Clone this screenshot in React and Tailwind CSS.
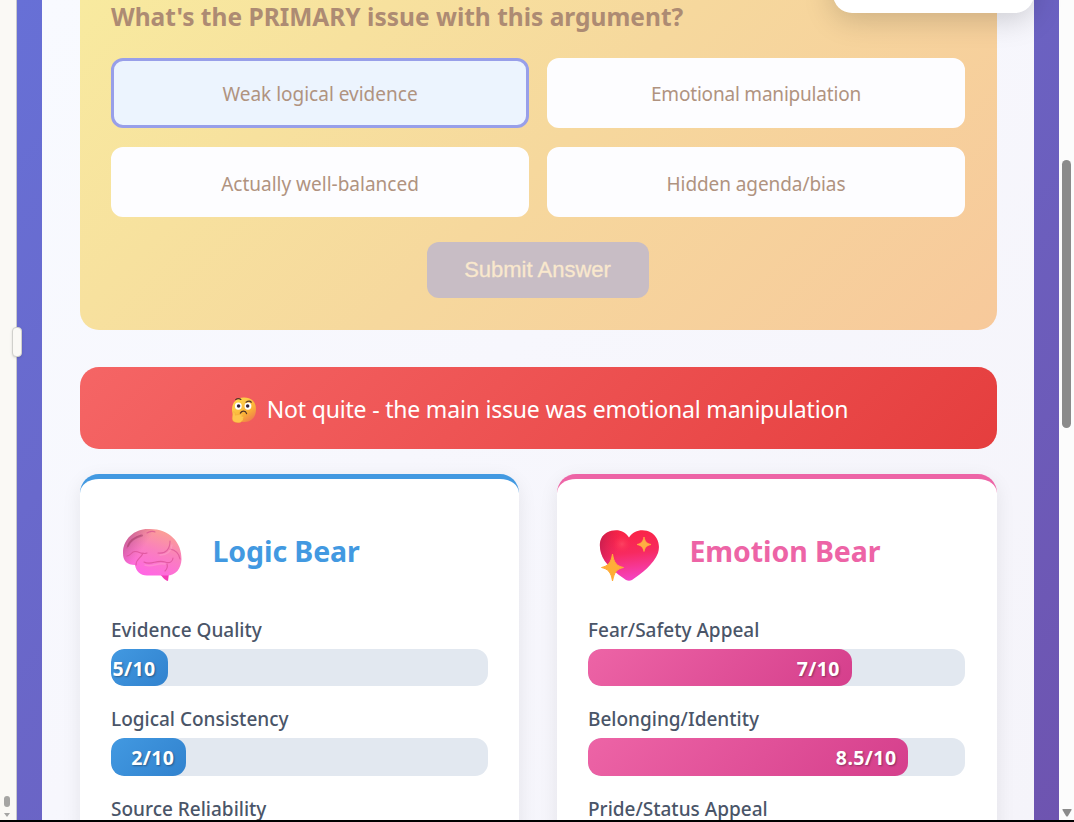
const options = [
  { label: "Weak logical evidence", style: "pt-0.5 tracking-normal", selected: true },
  { label: "Emotional manipulation", style: "pt-0.5 tracking-[-0.2px]" },
  { label: "Actually well-balanced", style: "pt-1 tracking-normal" },
  { label: "Hidden agenda/bias", style: "pt-1 tracking-[-0.08px]" },
];

const logicMetrics = [
  { label: "Evidence Quality", score: "5/10", percent: 15 },
  { label: "Logical Consistency", score: "2/10", percent: 20 },
  { label: "Source Reliability" },
];

const emotionMetrics = [
  { label: "Fear/Safety Appeal", score: "7/10", percent: 70 },
  { label: "Belonging/Identity", score: "8.5/10", percent: 85 },
  { label: "Pride/Status Appeal" },
];

function BrainIcon() {
  return (
    <svg viewBox="0 0 60 54" className="h-[54px] w-[60px]" fill="none">
      <defs>
        <linearGradient id="brain" x1="42" y1="2" x2="26" y2="48" gradientUnits="userSpaceOnUse">
          <stop stopColor="#fba093" />
          <stop offset="0.45" stopColor="#fa80bd" />
          <stop offset="1" stopColor="#ff66e4" />
        </linearGradient>
        <linearGradient id="brainShade" x1="2" y1="10" x2="20" y2="22" gradientUnits="userSpaceOnUse">
          <stop stopColor="#a8487c" stopOpacity="0.65" />
          <stop offset="1" stopColor="#c05090" stopOpacity="0" />
        </linearGradient>
      </defs>
      <path d="M37 45h10l-1 8c-2 0-5-3-9-8z" fill="#f53bb5" />
      <path d="M28 1C14 0 1 10 1 25c0 8 4 12 12 12 1 6 5 10.500 12 10.500h20c9 0 14-7 14.500-16C60 14 47 1 28 1z" fill="url(#brain)" />
      <path d="M28 1C14 0 1 10 1 25c0 8 4 12 12 12 1 6 5 10.500 12 10.500h20c9 0 14-7 14.500-16C60 14 47 1 28 1z" fill="url(#brainShade)" />
      <g stroke="#d54a8f" strokeWidth="1.1" strokeLinecap="round" opacity="0.65">
        <path d="M5 20C7 13 12 10 19 7M25 5c3-2 7-2 8-1" />
        <path d="M5 28c4 0 4-4.500 8-4.500 5 0 7 3.500 12 1.500" />
        <path d="M14 37c0-7 5-6 7-12" />
        <path d="M22 34c7 4 13-3 21 0 5 2 8-1 8-4M45 36c1 3 0 5-2 7" />
        <path d="M36 25c8 1 12-4 12-12M48 21c5 1 9 4 10 10" />
      </g>
      <path d="M6 18c2-6 8-9 14-10.500" stroke="#9d4468" strokeWidth="2" strokeLinecap="round" opacity="0.5" />
      <path d="M38 27c7 0 11-3 12-10M23 37c7 3 13-3 20-1" stroke="#ffa9cf" strokeWidth="1.5" strokeLinecap="round" opacity="0.4" />
    </svg>
  );
}

function HeartIcon() {
  return (
    <svg viewBox="0 0 60 54" className="h-[54px] w-[60px]" fill="none">
      <defs>
        <linearGradient id="heart" x1="32" y1="2" x2="38" y2="52" gradientUnits="userSpaceOnUse">
          <stop stopColor="#fa2445" />
          <stop offset="0.45" stopColor="#f72a60" />
          <stop offset="1" stopColor="#f544c6" />
        </linearGradient>
        <radialGradient id="glow" cx="0" cy="0" r="1" gradientTransform="translate(23 16) scale(9)" gradientUnits="userSpaceOnUse">
          <stop stopColor="#ff5068" stopOpacity="0.65" />
          <stop offset="1" stopColor="#ff3050" stopOpacity="0" />
        </radialGradient>
        <linearGradient id="heartShade" x1="0" y1="14" x2="20" y2="18" gradientUnits="userSpaceOnUse">
          <stop stopColor="#a01850" stopOpacity="0.55" />
          <stop offset="1" stopColor="#d01850" stopOpacity="0" />
        </linearGradient>
        <linearGradient id="star" x1="0" y1="10" x2="0" y2="54" gradientUnits="userSpaceOnUse">
          <stop stopColor="#ffad45" />
          <stop offset="1" stopColor="#ffae30" />
        </linearGradient>
      </defs>
      <path d="M30 9.500C35 1.500 45 .5 52 4.500c7 4 9.500 13 7 20.500-4 11-17 21-26 27-2 1-4 1-6 0C17 45 5 36 2 25-.5 16 1 8.500 8 4.500c8-4 17-3 22 5z" fill="url(#heart)" />
      <path d="M30 9.500C35 1.500 45 .5 52 4.500c7 4 9.500 13 7 20.500-4 11-17 21-26 27-2 1-4 1-6 0C17 45 5 36 2 25-.5 16 1 8.500 8 4.500c8-4 17-3 22 5z" fill="url(#heartShade)" />
      <circle cx="23" cy="16" r="9" fill="url(#glow)" />
      <path d="M45 9c1 5 3 6.500 7 7.500-4 1-6 2.500-7 7-1-4.500-3-6-7-7 4-1 6-2.500 7-7.500z" fill="url(#star)" stroke="#ffac40" strokeWidth=".8" strokeLinejoin="round" />
      <path d="M13.500 26c1.500 9 4 12 11 13.500C17.500 41 15.500 44 13.500 53 12 44 9 41 2.500 39.500 9 38 12 35 13.500 26z" fill="url(#star)" stroke="#ffac38" strokeLinejoin="round" />
    </svg>
  );
}

function ThinkingIcon() {
  return (
    <svg viewBox="0 0 24 25" className="mt-[3px] h-[26px] w-[26px] shrink-0" fill="none">
      <defs>
        <linearGradient id="face" x1="4" y1="2" x2="20" y2="24" gradientUnits="userSpaceOnUse">
          <stop stopColor="#ffd94f" />
          <stop offset="0.6" stopColor="#fab137" />
          <stop offset="1" stopColor="#ee744f" />
        </linearGradient>
      </defs>
      <path d="M12 .5c7 0 11.500 4 11.500 11.500S19 24 12 24 .5 19 .5 12 5 .5 12 .5z" fill="url(#face)" />
      <ellipse cx="6.500" cy="8.700" rx="3.300" ry="3.500" fill="#fff" />
      <ellipse cx="15.800" cy="8.700" rx="3.300" ry="3.500" fill="#fff" />
      <circle cx="6.800" cy="8.600" r="1.700" fill="#342438" />
      <circle cx="15.500" cy="8.600" r="1.700" fill="#342438" />
      <path d="M4 2.500C5.500 1.200 8 1.500 9 2.300M14 5c2-1.200 4-1 5 0M8.500 15.500c1.500-2.500 5-2.500 6 .5" stroke="#533327" strokeWidth="1.200" strokeLinecap="round" />
      <path d="M1.500 14.500c1-1 2 0 2 3l6-1c2-.5 2 1.500 0 1.800l1.500.5c1 .5 1 1.500 0 2 .5 1 0 2-1 2 0 1.200-1.500 2-4 2C2 24.500.3 23 .8 19z" fill="#ffc54d" stroke="#eb9e38" strokeWidth=".3" />
    </svg>
  );
}

function Metric({ label, score, percent, fill }) {
  return (
    <div className="h-[89.4px]">
      <div className="h-[31px] text-[19px] leading-[25px] font-medium whitespace-nowrap text-[#4a5568]">{label}</div>
      {score && (
        <div className="h-[37.3px] overflow-hidden rounded-[13px] bg-[#e2e8f0]">
          <div
            className={`flex h-full items-center justify-end rounded-[13px] pr-3 text-[19.5px] font-bold text-white [text-shadow:1px_1px_2px_rgba(0,0,0,0.35)] ${fill}`}
            style={{ width: `${percent}%` }}
          >
            <span className="pt-0.5 tracking-[0.4px]">{score}</span>
          </div>
        </div>
      )}
    </div>
  );
}

function BearCard({ title, icon, frame, color, fill, metrics }) {
  return (
    <section className={`h-[400px] rounded-t-[19px] border-t-[5px] bg-white pl-[31px] shadow-[0_5px_19px_rgba(0,0,0,0.08)] ${frame}`}>
      <div className="flex h-[139px] items-start pt-[49px] pl-[11px]">
        {icon}
        <h2 className={`ml-[30.5px] text-[28.5px] leading-[46px] font-bold tracking-[-0.1px] whitespace-nowrap ${color}`}>{title}</h2>
      </div>
      {metrics.map((m) => (
        <Metric key={m.label} {...m} fill={fill} />
      ))}
    </section>
  );
}

export default function App() {
  return (
    <div className="relative flex h-[822px] w-[1074px] flex-col overflow-hidden bg-black font-['Noto_Sans',sans-serif]">
      <div className="flex h-[820px] overflow-hidden">
        <aside className="flex w-[17px] shrink-0 flex-col items-center justify-end border-r border-[#c9c9cc] bg-[#faf9f5] pr-[3px] pb-[3px]">
          <div className="h-[11px] w-1.5 rounded-full bg-[#a5a5a3]" />
          <svg viewBox="0 0 6 4" className="mt-[6px] h-1 w-1.5 fill-[#a5a5a3]"><path d="M0 0h6L3 4z" /></svg>
        </aside>

        <div className="flex w-[1042px] shrink-0 bg-[linear-gradient(135deg,#6770d6_0%,#6b62c2_55%,#6e54b0_100%)] px-[25px]">
          <main className="h-[820px] w-[992px] bg-[linear-gradient(135deg,#f8faff_0%,#f7f7fd_45%,#f5f4fa_100%)] pr-[37px] pl-[38px]">
            <section className="h-[330px] rounded-b-[19px] bg-[linear-gradient(135deg,#f8ea9f_0%,#f6d89d_50%,#f7c99b_100%)] pr-8 pl-[31px]">
              <h1 className="h-[58px] text-[24.5px] leading-[34px] font-bold whitespace-nowrap text-[#ad8b73]">
                What's the PRIMARY issue with this argument?
              </h1>
              <div className="grid grid-cols-2 gap-x-[18px] gap-y-[19px]">
                {options.map((o) => (
                  <button
                    key={o.label}
                    className={`h-[70px] rounded-[12px] border-[3px] text-[19px] text-[#b09380] ${o.style} ${
                      o.selected ? "border-[#989fe9] bg-[#ecf4fe]" : "border-[#fdfdff] bg-[#fdfdff]"
                    }`}
                  >
                    {o.label}
                  </button>
                ))}
              </div>
              <div className="mt-[25px] flex justify-center pr-px">
                <button className="h-14 w-[222px] rounded-[12px] bg-[#c8bdc5] pb-0.5 font-['Liberation_Sans',sans-serif] text-[22px] text-[#f9e8cd] [-webkit-text-stroke:0.3px_#f9e8cd]">
                  Submit Answer
                </button>
              </div>
            </section>

            <div className="mt-[37px] flex h-[82px] items-center justify-center rounded-[19px] bg-[linear-gradient(135deg,#f56565_0%,#e53e3e_100%)] pl-0.5 text-[23px] tracking-[-0.19px] whitespace-nowrap text-white">
              <ThinkingIcon />
              <span className="ml-[10px] pt-0.5">Not quite - the main issue was emotional manipulation</span>
            </div>

            <div className="mt-[25px] flex gap-[38px]">
              <BearCard
                title="Logic Bear"
                icon={<BrainIcon />}
                frame="w-[439px] border-[#4299e1] pr-[31px]"
                color="text-[#4299e1]"
                fill="bg-[linear-gradient(135deg,#4299e1,#3182ce)]"
                metrics={logicMetrics}
              />
              <BearCard
                title="Emotion Bear"
                icon={<HeartIcon />}
                frame="w-[440px] border-[#ed64a6] pr-8"
                color="text-[#ed64a6]"
                fill="bg-[linear-gradient(135deg,#ed64a6,#d53f8c)]"
                metrics={emotionMetrics}
              />
            </div>
          </main>
        </div>

        <div className="flex w-[15px] shrink-0 flex-col items-center bg-[#fcfcfc] pt-40">
          <div className="h-[268px] w-[9px] rounded-full bg-[#8b8b8b]" />
          <svg viewBox="0 0 10 8" className="mt-auto mb-[3px] h-2 w-2.5 fill-[#8b8b8b]"><path d="M1 0h8q1 0 .5 1L6 7q-1 1-2 0L.5 1Q0 0 1 0z" /></svg>
        </div>
      </div>

      <div className="absolute -top-10 left-[833px] h-[53px] w-[201px] rounded-[19px] bg-white shadow-[0_6px_30px_rgba(0,0,0,0.18)]" />
      <div className="absolute top-[327px] left-3 h-[30px] w-[10px] rounded-[4px] border border-[#d0d0cc] bg-[#faf9f5] shadow-sm" />
    </div>
  );
}
